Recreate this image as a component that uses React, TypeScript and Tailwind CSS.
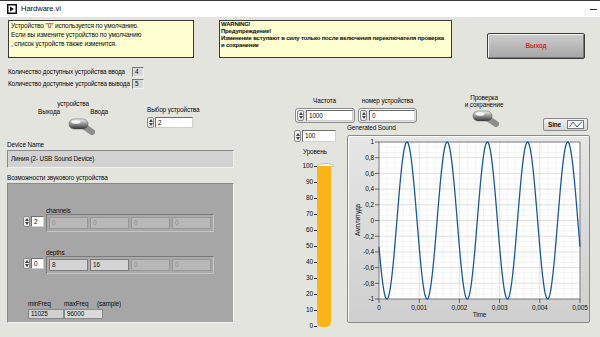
import { FC, ReactNode } from 'react';

const Spin: FC = () => (
  <div className="flex h-full w-[7px] shrink-0 flex-col items-center justify-center gap-[1px] rounded-[2px] border border-[#8a8a8a] bg-[#ececec]">
    <span className="h-0 w-0 border-x-[2px] border-b-[3px] border-x-transparent border-b-[#444]" />
    <span className="h-0 w-0 border-x-[2px] border-t-[3px] border-x-transparent border-t-[#444]" />
  </div>
);

const Field: FC<{ children: ReactNode; className?: string }> = ({ children, className = '' }) => (
  <div
    className={`flex flex-1 items-center border border-t-[#6e6e6e] border-l-[#6e6e6e] border-r-[#d0d0d0] border-b-[#d0d0d0] bg-white pl-[2px] ${className}`}
  >
    {children}
  </div>
);

const Toggle: FC<{ id: string }> = ({ id }) => (
  <svg width="28" height="20" viewBox="0 0 28 20">
    <defs>
      <linearGradient id={id} x1="0" y1="0" x2="0" y2="1">
        <stop offset="0" stopColor="#f4f4f4" />
        <stop offset="0.45" stopColor="#9a9a9a" />
        <stop offset="1" stopColor="#333" />
      </linearGradient>
    </defs>
    <line x1="14" y1="9" x2="24" y2="16" stroke="#8e8e8e" strokeWidth="6" strokeLinecap="round" />
    <rect x="1" y="3" width="19" height="10" rx="5" fill={`url(#${id})`} stroke="#555" strokeWidth="0.5" />
    <ellipse cx="8" cy="6" rx="4.5" ry="1.8" fill="#fff" opacity="0.85" />
  </svg>
);

const Elem: FC<{ v: string; on?: boolean }> = ({ v, on }) => (
  <div
    className={`flex h-[12px] w-[39px] items-center border pl-[2px] ${
      on ? 'border-[#7c7c7c] bg-[#d4d4d4] text-[#111]' : 'border-[#989898] bg-[#b8b8b8] text-[#8e8e8e]'
    }`}
  >
    {v}
  </div>
);

const ArrayRow: FC<{ label: string; index: string; items: { v: string; on?: boolean }[] }> = ({ label, index, items }) => (
  <div className="flex flex-col">
    <div className="ml-[23px] mb-[-1px] leading-[8px]">{label}</div>
    <div className="flex items-start">
      <div className="mt-[2px] flex h-[11px] w-[21px] gap-[1px]">
        <Spin />
        <Field>{index}</Field>
      </div>
      <div className="ml-[2px] flex h-[18px] w-[168px] items-center gap-[2px] border border-t-[#7a7a7a] border-l-[#7a7a7a] border-r-[#c4c4c4] border-b-[#c4c4c4] bg-[#a9a9a9] px-[2px]">
        {items.map((it, i) => (
          <Elem key={i} v={it.v} on={it.on} />
        ))}
      </div>
    </div>
  </div>
);

const yTicks = ['1', '0,8', '0,6', '0,4', '0,2', '0', '-0,2', '-0,4', '-0,6', '-0,8', '-1'];
const xTicks = ['0', '0,001', '0,002', '0,003', '0,004', '0,005'];

const Graph: FC = () => {
  const X0 = 31, Y0 = 6, W = 201, H = 157;
  const pts: string[] = [];
  for (let i = 0; i <= 500; i++) {
    const t = (i / 500) * 0.005;
    const v = Math.sin(2 * Math.PI * 1000 * t - 2.8);
    pts.push(`${(X0 + (i / 500) * W).toFixed(2)},${(Y0 + ((1 - v) / 2) * H).toFixed(2)}`);
  }
  const minorX = Array.from({ length: 26 }, (_, i) => X0 + (i * W) / 25);
  const minorY = Array.from({ length: 31 }, (_, i) => Y0 + (i * H) / 30);
  return (
    <svg width="241" height="186" viewBox="0 0 241 186" className="block">
      <rect x={X0} y={Y0} width={W} height={H} fill="#fff" />
      {minorX.map((x, i) => (
        <line key={'mx' + i} x1={x} y1={Y0} x2={x} y2={Y0 + H} stroke={i % 5 === 0 ? '#cdcdcd' : '#ececec'} strokeWidth="0.6" />
      ))}
      {minorY.map((y, i) => (
        <line key={'my' + i} x1={X0} y1={y} x2={X0 + W} y2={y} stroke={i % 3 === 0 ? '#cdcdcd' : '#ececec'} strokeWidth="0.6" />
      ))}
      <rect x={X0} y={Y0} width={W} height={H} fill="none" stroke="#6a6a6a" strokeWidth="0.8" />
      <polyline points={pts.join(' ')} fill="none" stroke="#1c5a96" strokeWidth="1.3" />
      {yTicks.map((t, i) => {
        const y = Y0 + (i * H) / 10;
        return (
          <g key={t}>
            <line x1={X0 - 4} y1={y} x2={X0} y2={y} stroke="#333" strokeWidth="0.7" />
            <text x={X0 - 5} y={y + 2.3} fontSize="6.5" textAnchor="end" fill="#111">
              {t}
            </text>
          </g>
        );
      })}
      {xTicks.map((t, i) => {
        const x = X0 + (i * W) / 5;
        return (
          <g key={t}>
            <line x1={x} y1={Y0 + H} x2={x} y2={Y0 + H + 4} stroke="#333" strokeWidth="0.7" />
            <text x={x} y={Y0 + H + 11} fontSize="6.5" textAnchor="middle" fill="#111">
              {t}
            </text>
          </g>
        );
      })}
      <text x={X0 + W / 2} y={181} fontSize="6.5" textAnchor="middle" fill="#111">
        Time
      </text>
      <text x={12} y={84} fontSize="6.5" textAnchor="middle" fill="#111" transform="rotate(-90 12 84)">
        Амплитуда
      </text>
    </svg>
  );
};

const tankLabels = ['100', '90', '80', '70', '60', '50', '40', '30', '20', '10', '0'];

export default function App() {
  return (
    <div className="flex h-[337px] w-[600px] flex-col overflow-hidden whitespace-nowrap bg-[#e4e4df] font-['Liberation_Sans',Arial,sans-serif] text-[6.4px] tracking-[-0.12px] text-[#0a0a0a]">
      {/* title bar */}
      <div className="flex h-[17px] shrink-0 items-center border-t border-[#3a3a3a] bg-white pl-[7px]">
        <svg width="10" height="10" viewBox="0 0 10 10">
          <rect x="0" y="0" width="10" height="10" fill="#111" />
          <rect x="1.5" y="1.5" width="7" height="7" fill="#fff" />
          <path d="M3 2.5 L7 5 L3 7.5 Z" fill="#111" />
        </svg>
        <span className="ml-[4px] text-[7.5px] tracking-normal">Hardware.vi</span>
        <span className="ml-auto mr-[3px] h-px w-[7px] bg-[#333]" />
      </div>

      <div className="flex flex-1 flex-col">
        {/* top row */}
        <div className="flex items-start pl-[8px] pt-[3px]">
          <div className="h-[38px] w-[186px] border border-[#3a3a3a] bg-[#ffffd2] pl-[2px] text-[6.5px] leading-[9px]">
            <div>Устройство "0" используется по умолчанию.</div>
            <div>Если вы измените устройство по умолчанию</div>
            <div>, список устройств также изменится.</div>
          </div>
          <div className="ml-[25px] h-[38px] w-[233px] overflow-hidden border border-[#3a3a3a] bg-[#ffffd2] pl-[1px] text-[6px] font-bold leading-[7px] tracking-[-0.2px]">
            <div>WARNING!</div>
            <div>Предупреждение!</div>
            <div>Изменение вступают в силу только после включения переключателя проверка</div>
            <div>и сохранение</div>
          </div>
          <div className="ml-[35px] mt-[13px] flex h-[26px] w-[98px] items-center justify-center rounded-[2px] border border-[#3c3c3c] bg-linear-to-b from-[#cdcdcd] to-[#a6a6a6] shadow-[inset_1px_1px_0_#f2f2f2,inset_-1px_-1px_0_#777]">
            <span className="text-[6.5px] font-bold text-[#e0262a]">Выход</span>
          </div>
        </div>

        {/* device counts */}
        <div className="mt-[8px] flex h-[10px] items-center pl-[8px]">
          <span className="w-[124px]">Количество доступных устройства ввода</span>
          <div className="flex h-[10px] w-[12px] items-center border border-t-[#7a7a7a] border-l-[#7a7a7a] border-r-[#f0f0f0] border-b-[#f0f0f0] bg-[#d8d8d8] pl-[2px]">4</div>
        </div>
        <div className="mt-[2px] flex h-[10px] items-center pl-[8px]">
          <span className="w-[124px]">Количество доступные устройства вывода</span>
          <div className="flex h-[10px] w-[12px] items-center border border-t-[#7a7a7a] border-l-[#7a7a7a] border-r-[#f0f0f0] border-b-[#f0f0f0] bg-[#d8d8d8] pl-[2px]">5</div>
        </div>

        <div className="flex items-start">
          {/* left column */}
          <div className="ml-[7px] flex w-[227px] flex-col">
            <div className="flex items-start">
              <div className="ml-[31px] mt-[11px] flex w-[70px] flex-col">
                <div className="text-center leading-[8px]">устройства</div>
                <div className="flex justify-between leading-[8px]">
                  <span>Выхода</span>
                  <span>Ввода</span>
                </div>
                <div className="ml-[30px]">
                  <Toggle id="tg1" />
                </div>
              </div>
              <div className="ml-[39px] mt-[17px] flex w-[46px] flex-col">
                <div className="leading-[8px]">Выбор устройства</div>
                <div className="mt-[3px] flex h-[11px] gap-[1px]">
                  <Spin />
                  <Field>2</Field>
                </div>
              </div>
            </div>

            <div className="mt-[5px] leading-[8px]">Device Name</div>
            <div className="mt-[1px] flex h-[18px] items-start border border-t-[#8a8a8a] border-l-[#8a8a8a] border-r-[#f0f0f0] border-b-[#f0f0f0] bg-[#d2d2d2] pl-[3px] pt-[3px]">
              Линия (2- USB Sound Device)
            </div>

            <div className="mt-[6px] leading-[8px]">Возможности звукового устройства</div>
            <div className="mt-[1px] flex h-[140px] flex-col border border-t-[#8a8a8a] border-l-[#8a8a8a] border-r-[#f4f4f4] border-b-[#f4f4f4] bg-[#a6a6a6] pl-[15px]">
              <div className="mt-[23px]">
                <ArrayRow
                  label="channels"
                  index="2"
                  items={[{ v: '0' }, { v: '0' }, { v: '0' }, { v: '0' }]}
                />
              </div>
              <div className="mt-[17px]">
                <ArrayRow
                  label="depths"
                  index="0"
                  items={[{ v: '8', on: true }, { v: '16', on: true }, { v: '0' }, { v: '0' }]}
                />
              </div>
              <div className="ml-[5px] mt-[26px] flex flex-col">
                <div className="flex leading-[8px]">
                  <span className="w-[36px]">minFreq</span>
                  <span className="w-[33px]">maxFreq</span>
                  <span>(sample)</span>
                </div>
                <div className="mt-[1px] flex">
                  <div className="flex h-[10px] w-[36px] items-center border border-[#8a8a8a] bg-[#d0d0d0] pl-[2px]">11025</div>
                  <div className="flex h-[10px] w-[39px] items-center border border-[#8a8a8a] bg-[#dadada] pl-[2px]">96000</div>
                </div>
              </div>
            </div>
          </div>

          {/* right region */}
          <div className="ml-[60px] flex w-[296px] flex-col">
            <div className="flex h-[29px] items-start">
              <div className="mt-[8px] flex w-[61px] flex-col items-center">
                <div className="leading-[8px]">Частота</div>
                <div className="ml-[1px] mt-[3px] flex h-[15px] w-[60px] gap-[2px] rounded-[3px] border border-[#8c8c8c] bg-[#dedede] p-[1px] shadow-[inset_1px_1px_0_#fafafa]">
                  <Spin />
                  <Field>1000</Field>
                </div>
              </div>
              <div className="ml-[3px] mt-[8px] flex w-[59px] flex-col items-center">
                <div className="leading-[8px]">номер устройства</div>
                <div className="mt-[3px] flex h-[15px] w-[59px] gap-[2px] rounded-[3px] border border-[#8c8c8c] bg-[#dedede] p-[1px] shadow-[inset_1px_1px_0_#fafafa]">
                  <Spin />
                  <Field>0</Field>
                </div>
              </div>
              <div className="ml-[46px] mt-[5px] flex w-[42px] flex-col items-center">
                <div className="leading-[7px]">Проверка</div>
                <div className="leading-[7px]">и сохранение</div>
                <div className="ml-[4px]">
                  <Toggle id="tg2" />
                </div>
              </div>
            </div>

            <div className="flex items-start">
              {/* tank */}
              <div className="flex w-[42px] flex-col">
                <div className="mt-[12px] flex h-[12px] gap-[1px]">
                  <Spin />
                  <Field>100</Field>
                </div>
                <div className="mt-[6px] pl-[9px] leading-[8px]">Уровень</div>
                <div className="mt-[6px] flex h-[168px]">
                  <div className="flex w-[23px] flex-col justify-between text-[6.5px]">
                    {tankLabels.map((l) => (
                      <div key={l} className="flex h-[8px] items-center justify-end leading-[8px]">
                        <span>{l}</span>
                        <span className="ml-[1px] h-px w-[3px] bg-[#333]" />
                      </div>
                    ))}
                  </div>
                  <div className="mt-[1px] flex w-[17px] flex-col">
                    <div className="h-[5px] w-[17px] rounded-[50%] border border-[#bdbdbd] bg-[#fafafa]" />
                    <div className="-mt-[2px] h-[161px] w-[14px] rounded-b-[5px] bg-[#f9b418]" />
                  </div>
                </div>
              </div>

              {/* graph */}
              <div className="ml-[11px] flex w-[243px] flex-col">
                <div className="flex h-[17px] items-start justify-between">
                  <span className="mt-[6px] leading-[8px]">Generated Sound</span>
                  <div className="mr-[2px] flex h-[13px] w-[45px] items-center gap-[3px] rounded-[2px] border border-[#8c8c8c] bg-linear-to-b from-[#f2f2f2] to-[#d4d4d4] pl-[4px] pr-[3px]">
                    <span className="font-bold">Sine</span>
                    <div className="ml-auto flex h-[9px] w-[17px] items-center justify-center border border-[#7a7a7a] bg-white">
                      <svg width="13" height="7" viewBox="0 0 13 7">
                        <polyline points="0.5,6 4,1 8,6 12.5,1" fill="none" stroke="#1e3f6e" strokeWidth="0.9" />
                      </svg>
                    </div>
                  </div>
                </div>
                <div className="h-[188px] w-[243px] rounded-[2px] border border-[#8a8a8a] bg-linear-to-b from-[#e6e6e6] to-[#cfcfcf] shadow-[inset_1px_1px_0_#fafafa]">
                  <Graph />
                </div>
              </div>
            </div>
          </div>
        </div>
      </div>
    </div>
  );
}
